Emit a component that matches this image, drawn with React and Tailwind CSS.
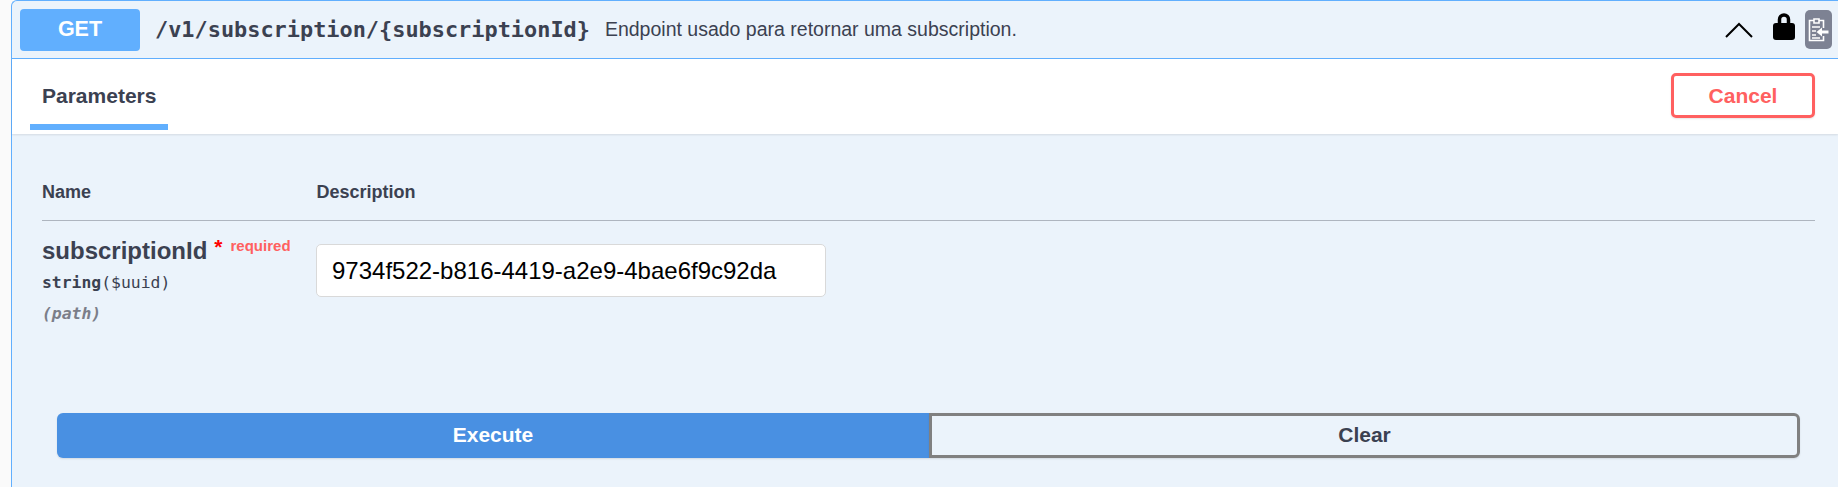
export default function App() {
  return (
    <div className="h-[487px] w-[1838px] overflow-hidden bg-[#fafafa] pl-[11px] font-['Liberation_Sans',sans-serif] text-[#3b4151]">
      <div className="h-[500px] rounded-tl-[6px] border-t border-l border-[#61affe] bg-[#ebf3fb]">
        <div className="flex h-[58px] items-center border-b border-[#61affe] pl-[8px] pr-[6px]">
          <div className="flex h-[42px] w-[120px] items-center justify-center rounded-[4px] bg-[#61affe] text-[21.5px] font-bold text-white">GET</div>
          <div className="ml-[15px] pt-[2px] font-['DejaVu_Sans_Mono',monospace] text-[21.9px] font-bold">/v1/subscription/&#123;subscriptionId&#125;</div>
          <div className="ml-[15px] text-[19.5px] text-[#3b4151]">Endpoint usado para retornar uma subscription.</div>
          <div className="ml-auto flex items-center">
            <svg className="mr-[20px]" width="28" height="16" viewBox="0 0 28 16" fill="none" stroke="#000" strokeWidth="2"><path d="M1 15 14 2l13 13" /></svg>
            <svg className="mr-[10px] mb-[6px]" width="22" height="27" viewBox="0 0 22 27" fill="#000"><path d="M3 10h16a3 3 0 0 1 3 3v11a3 3 0 0 1-3 3H3a3 3 0 0 1-3-3V13a3 3 0 0 1 3-3Z" /><path d="M6.500 11V6.500a4.500 4.500 0 0 1 9 0V11" fill="none" stroke="#000" strokeWidth="3.500" /></svg>
            <div className="flex h-[39px] w-[27px] items-center justify-center rounded-[5px] bg-[#7d8293]">
              <svg width="21" height="25" viewBox="0 0 21 25" fill="none" stroke="#fff" strokeWidth="1.600"><path d="M6 3.500H1.500v20h14V19M15.500 11V3.500H11M6 2h5v4H6zM4 10h8M4 14h4M4 18h4M4 21h8" /><path d="M20.500 15H12" strokeWidth="3" /><path d="M14 10.500v9L8.500 15Z" fill="#fff" stroke="none" /></svg>
            </div>
          </div>
        </div>
        <div className="flex h-[75px] items-center justify-between bg-white pr-[23px] shadow-[0_1px_2px_rgba(0,0,0,0.1)]">
          <div className="relative ml-[18px] flex h-full w-[138px] items-center">
            <span className="ml-[12px] mb-[1px] text-[21px] font-bold">Parameters</span>
            <div className="absolute bottom-[4px] left-0 h-[6px] w-full bg-[#61affe]" />
          </div>
          <button className="mb-[2px] h-[45px] w-[144px] rounded-[5px] border-[3px] border-[#ff6060] bg-transparent text-[21px] font-bold text-[#ff6060] shadow-[0_1px_2px_rgba(0,0,0,0.1)]">Cancel</button>
        </div>
        <div className="pl-[30px] pr-[23px]">
          <div className="flex items-center border-b border-[#3b415159] pt-[47px] pb-[17px] leading-[22px]">
            <div className="w-[274.5px] text-[18px] font-bold">Name</div>
            <div className="text-[18px] font-bold">Description</div>
          </div>
          <div className="flex pt-[15px]">
            <div className="w-[274px]">
              <div className="flex items-start">
                <span className="text-[24px] font-bold leading-[29px]">subscriptionId</span>
                <span className="ml-[7px] -mt-[4px] text-[21px] font-bold leading-[29px] text-[#f00]">*</span>
                <span className="ml-[8px] mt-[1px] text-[15px] font-bold leading-[18px] text-[#ff6060]">required</span>
              </div>
              <div className="mt-[8px] font-['DejaVu_Sans_Mono',monospace] text-[16.4px] font-bold leading-[20px]">string<span className="font-normal">($uuid)</span></div>
              <div className="mt-[11px] font-['DejaVu_Sans_Mono',monospace] text-[16.4px] font-bold italic leading-[20px] text-[#7b7e89]">(path)</div>
            </div>
            <div className="mt-[8px] flex h-[53px] w-[510px] items-center rounded-[5px] border border-[#d9d9d9] bg-white pl-[15px] text-[24px] text-black">9734f522-b816-4419-a2e9-4bae6f9c92da</div>
          </div>
        </div>
        <div className="flex pl-[45px] pt-[89px]">
          <button className="h-[45px] w-[872px] rounded-l-[6px] bg-[#4990e2] pb-[1px] text-[21px] font-bold text-white shadow-[0_1px_2px_rgba(0,0,0,0.1)]">Execute</button>
          <button className="h-[45px] w-[871px] rounded-r-[6px] border-[3px] border-[#808080] bg-transparent pb-[1px] text-[21px] font-bold text-[#3b4151] shadow-[0_1px_2px_rgba(0,0,0,0.1)]">Clear</button>
        </div>
      </div>
    </div>
  );
}
